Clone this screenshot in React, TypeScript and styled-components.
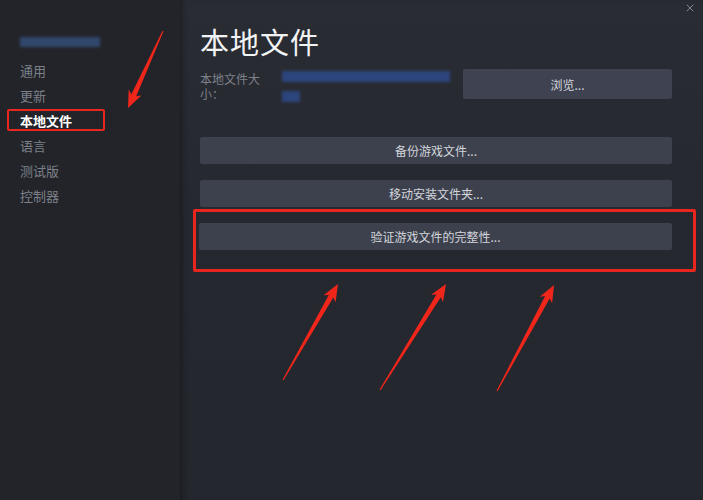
import { FC } from "react";
import styled, { createGlobalStyle } from "styled-components";
import { X } from "lucide-react";

const GlobalStyle = createGlobalStyle`
  html, body {
    margin: 0;
    padding: 0;
    background: #24262d;
  }
  body {
    font-family: "Noto Sans CJK SC", "Noto Sans", sans-serif;
  }
`;

const ANNOTATION_RED = "#e8261e";

const Styles = {
  Window: styled.div`
    position: relative;
    display: flex;
    width: 703px;
    height: 500px;
    overflow: hidden;
  `,
  Sidebar: styled.nav`
    display: flex;
    flex-direction: column;
    width: 180px;
    padding-top: 37px;
    box-sizing: border-box;
    background: #22242a;
  `,
  BlurredName: styled.div`
    width: 80px;
    height: 10px;
    margin: 0 0 11px 20px;
    background: #35507d;
    filter: blur(1.5px);
    opacity: 0.8;
  `,
  NavItem: styled.div<{ $active?: boolean }>`
    position: relative;
    display: flex;
    align-items: center;
    height: 25px;
    padding-left: 20px;
    font-size: 13px;
    color: ${({ $active }) => ($active ? "#ffffff" : "#7c8088")};
    font-weight: ${({ $active }) => ($active ? 700 : 400)};

    ${({ $active }) =>
      $active &&
      `
      &::after {
        content: "";
        position: absolute;
        left: 7px;
        top: 1px;
        width: 98px;
        height: 22px;
        box-sizing: border-box;
        border: 2px solid ${ANNOTATION_RED};
        border-radius: 2px;
      }
    `}
  `,
  Main: styled.main`
    position: relative;
    flex: 1;
    display: flex;
    flex-direction: column;
    padding: 23px 31px 0 20px;
    background: linear-gradient(180deg, #2a2c34 0%, #262830 45%, #25272e 100%);
    box-shadow: inset 6px 0 6px -4px rgba(0, 0, 0, 0.35);
  `,
  Close: styled.div`
    position: absolute;
    top: 2px;
    right: 7px;
    color: #9a9ea6;
    display: flex;
  `,
  Title: styled.h1`
    margin: 0;
    font-size: 29px;
    line-height: 36px;
    font-weight: 400;
    color: #f2f3f5;
    letter-spacing: 1px;
  `,
  SizeRow: styled.div`
    display: flex;
    align-items: flex-start;
    margin-top: 10px;
  `,
  SizeLabel: styled.div`
    width: 64px;
    margin-right: 18px;
    padding-top: 2px;
    font-size: 12px;
    line-height: 15px;
    color: #7d8189;
  `,
  SizeValue: styled.div`
    display: flex;
    flex-direction: column;
    gap: 9px;
    width: 170px;
    padding-top: 2px;
  `,
  BlurLine: styled.div<{ $width: number }>`
    height: 11px;
    width: ${({ $width }) => $width}px;
    background: #2f4f96;
    filter: blur(1.5px);
    opacity: 0.75;
  `,
  Button: styled.button`
    display: flex;
    align-items: center;
    justify-content: center;
    height: 27px;
    border: none;
    border-radius: 2px;
    background: #3d414e;
    color: #d3d6db;
    font-family: inherit;
    font-size: 12px;
    padding: 0;
  `,
  Actions: styled.div`
    display: flex;
    flex-direction: column;
    margin-top: 35px;
    gap: 16px;
  `,
  Highlight: styled.div`
    display: flex;
    flex-direction: column;
    margin: -14px -24px 0 -7px;
    padding: 11px 21px 19px 3px;
    border: 3px solid ${ANNOTATION_RED};
    border-radius: 2px;
  `,
  Arrows: styled.svg`
    position: absolute;
    inset: 0;
    pointer-events: none;
  `,
};

const BrowseButton = styled(Styles.Button)`
  margin-left: auto;
  width: 209px;
  height: 30px;
  background: #3f4351;
`;

type Pt = [number, number];

// tapered annotation arrow: thin tail, wider shaft near the head
const arrowPoints = (tail: Pt, tip: Pt): string => {
  const [tx, ty] = tail;
  const [hx, hy] = tip;
  const dx = hx - tx;
  const dy = hy - ty;
  const len = Math.hypot(dx, dy);
  const ux = dx / len;
  const uy = dy / len;
  const nx = -uy;
  const ny = ux;
  const headLen = 17;
  const bx = hx - ux * headLen;
  const by = hy - uy * headLen;
  const at = (x: number, y: number, w: number): [Pt, Pt] => [
    [x + nx * w, y + ny * w],
    [x - nx * w, y - ny * w],
  ];
  const [t1, t2] = at(tx, ty, 0.6);
  const [s1, s2] = at(bx + ux * 3, by + uy * 3, 2.6);
  const [h1, h2] = at(bx, by, 7);
  const pts: Pt[] = [t1, s1, h1, [hx, hy], h2, s2, t2];
  return pts.map(([x, y]) => `${x.toFixed(1)},${y.toFixed(1)}`).join(" ");
};

const arrows: { tail: Pt; tip: Pt }[] = [
  { tail: [163, 31], tip: [128, 108] },
  { tail: [283, 380], tip: [338, 284] },
  { tail: [380, 390], tip: [446, 284] },
  { tail: [497, 391], tip: [554, 285] },
];

const navItems = ["通用", "更新", "本地文件", "语言", "测试版", "控制器"];

const App: FC = () => {
  return (
    <>
      <GlobalStyle />
      <Styles.Window>
        <Styles.Sidebar>
          <Styles.BlurredName />
          {navItems.map((item) => (
            <Styles.NavItem key={item} $active={item === "本地文件"}>
              {item}
            </Styles.NavItem>
          ))}
        </Styles.Sidebar>

        <Styles.Main>
          <Styles.Close>
            <X size={12} strokeWidth={1.6} />
          </Styles.Close>
          <Styles.Title>本地文件</Styles.Title>
          <Styles.SizeRow>
            <Styles.SizeLabel>本地文件大小：</Styles.SizeLabel>
            <Styles.SizeValue>
              <Styles.BlurLine $width={168} />
              <Styles.BlurLine $width={18} />
            </Styles.SizeValue>
            <BrowseButton>浏览...</BrowseButton>
          </Styles.SizeRow>

          <Styles.Actions>
            <Styles.Button>备份游戏文件...</Styles.Button>
            <Styles.Button>移动安装文件夹...</Styles.Button>
            <Styles.Highlight>
              <Styles.Button>验证游戏文件的完整性...</Styles.Button>
            </Styles.Highlight>
          </Styles.Actions>
        </Styles.Main>

        <Styles.Arrows width={703} height={500} viewBox="0 0 703 500">
          {arrows.map(({ tail, tip }, i) => (
            <polygon key={i} points={arrowPoints(tail, tip)} fill="#f0261b" />
          ))}
        </Styles.Arrows>
      </Styles.Window>
    </>
  );
};

export default App;
